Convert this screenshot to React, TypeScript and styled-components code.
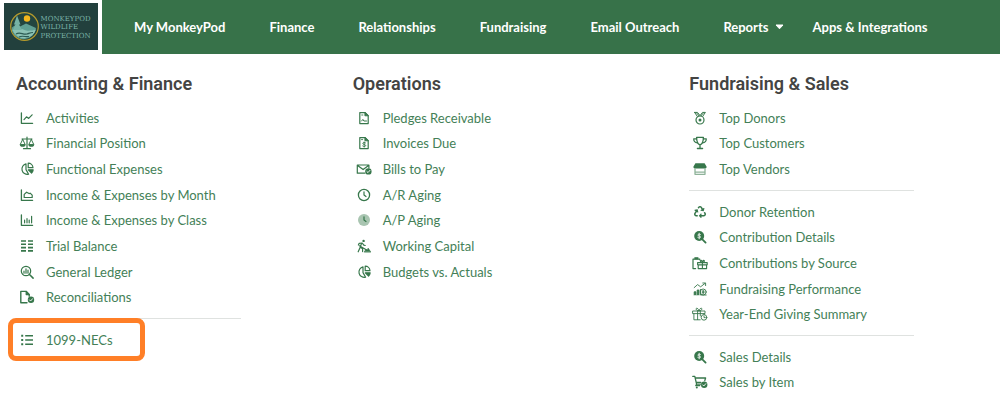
import React from "react";
import styled, { createGlobalStyle } from "styled-components";
import { FaRecycle } from "react-icons/fa";

const GlobalStyle = createGlobalStyle`
  *, *::before, *::after { box-sizing: border-box; }
  body {
    margin: 0;
    background: #fff;
    color: #447f57;
    font-family: Lato, "Open Sans", sans-serif;
    font-size: 13px;
  }
`;

const Header = styled.header`
  display: flex;
  height: 54px;
  background: #fff;
`;

const LogoLink = styled.a`
  flex: none;
  display: flex;
  padding: 3px 4px 4px;
`;

const Nav = styled.nav`
  flex: 1;
  display: flex;
  align-items: center;
  gap: 44px;
  padding-left: 32px;
  background: #377249;
  color: #fff;
  font-weight: 700;
`;

const navText = `
  font: inherit;
  color: inherit;
  line-height: 18px;
  white-space: nowrap;
`;

const NavLink = styled.a`
  ${navText}
  text-decoration: none;
`;

const NavButton = styled.button`
  ${navText}
  display: flex;
  align-items: center;
  gap: 6px;
  margin-right: -15px;
  padding: 0;
  border: 0;
  background: none;
`;

const Menu = styled.main`
  display: grid;
  grid-template-columns: repeat(3, 1fr);
  column-gap: 112px;
  padding: 18px 86px 0 16px;
`;

const Heading = styled.h2`
  margin: 0 0 9px;
  color: #444443;
  font: 600 18px/24px Roboto, sans-serif;
  white-space: nowrap;
`;

const Group = styled.ul`
  margin: 0;
  padding: 0;
  list-style: none;

  & + & {
    margin-top: 8px;
    padding-top: 8px;
    border-top: 1px solid #dfe2e0;
  }
`;

const Item = styled.li`
  position: relative;
  height: 26px;

  &:nth-child(3n + 1) {
    height: 25px;
  }
`;

const ItemLink = styled.a`
  display: flex;
  align-items: center;
  gap: 8px;
  height: 100%;
  color: inherit;
  text-decoration: none;
  white-space: nowrap;
`;

const IconSlot = styled.span`
  flex: none;
  display: flex;
  justify-content: center;
  width: 22px;
  color: #37774b;
`;

const Highlight = styled.span`
  position: absolute;
  top: -9px;
  left: -8px;
  width: 137px;
  height: 43px;
  border: 5px solid #ff7f27;
  border-radius: 8px;
  pointer-events: none;
`;

const Svg = ({ w = 14, children }: { w?: number; children: React.ReactNode }) => (
  <svg
    width={w}
    height={14}
    viewBox={`0 0 ${w} 14`}
    fill="none"
    stroke="currentColor"
    strokeWidth={1.2}
    strokeLinecap="round"
    strokeLinejoin="round"
    aria-hidden="true"
  >
    {children}
  </svg>
);

const CheckBadge = ({ x, y }: { x: number; y: number }) => (
  <g transform={`translate(${x} ${y})`}>
    <circle r={3.2} fill="currentColor" stroke="none" />
    <path d="M-1.5 0.1l1.1 1.1 2-2.3" stroke="#fff" strokeWidth={0.9} />
  </g>
);

const LineChart = () => (
  <Svg>
    <path d="M1.400 2v10.300h11.200" strokeWidth={1.300} />
    <path d="M4 8.600l2.500-2.800 2.200 1.600 3.400-3.600" />
  </Svg>
);

const AreaChart = () => (
  <Svg>
    <path d="M1.400 2v10.300h11.200" strokeWidth={1.300} />
    <path d="M4.200 9.500V6.400l2.400-2.200 2.400 1.400 1.200-.400L12.200 7.200v2.300z" />
  </Svg>
);

const BarChart = () => (
  <Svg>
    <path d="M1.400 2v10.300h11.200" strokeWidth={1.300} />
    <path d="M4.600 7.200V9.800M7 5.600v4.200M9.200 7v2.800M11.600 3.400v6.400" />
  </Svg>
);

const List = () => (
  <Svg>
    <path d="M5.200 2.800h7.800M5.200 7h7.800M5.200 11.200h7.800" strokeWidth={1.500} strokeLinecap="butt" />
    <path d="M1.200 2.800h2M1.200 7h2M1.200 11.200h2" strokeWidth={2} strokeLinecap="butt" />
  </Svg>
);

const Clock = () => (
  <Svg>
    <circle cx={7} cy={7} r={5.600} strokeWidth={1.300} />
    <path d="M7 3.800V7l2 1.500" />
  </Svg>
);

const Trophy = () => (
  <Svg>
    <path d="M3.600 1.400h6.800c0 4.200-1.200 6.600-3.400 7.400-2.200-.800-3.400-3.200-3.400-7.400zM7 8.800v3.400M4.400 12.500h5.200" strokeWidth={1.300} />
    <path d="M3.600 2.800H.7c0 2.400 1.500 3.900 3.700 4M10.400 2.800h2.900c0 2.400-1.500 3.900-3.700 4" />
  </Svg>
);

const Scale = () => (
  <Svg w={16}>
    <path d="M3 3h10M8 1.2v11.2M4.5 12.7h7" />
    <path d="M3.7 3.4L1.2 8.6h5L3.7 3.4zM12.3 3.4L9.8 8.6h5L12.3 3.4z" strokeWidth={1} />
    <path d="M.8 8.4h5.8a2.9 2.3 0 0 1-5.8 0zM9.4 8.4h5.8a2.9 2.3 0 0 1-5.8 0z" fill="currentColor" stroke="none" />
  </Svg>
);

const Pie = () => (
  <Svg>
    <path d="M6 1.800A5.200 5.200 0 1 0 8.600 12.200L6 7.600z" />
    <path d="M8.200 1.200a4.800 4.800 0 0 1 4.800 4.500H8.200z" />
    <path d="M8.300 7.800h4.900a5 5 0 0 1-1.600 3.200z" fill="currentColor" />
  </Svg>
);

const Ledger = () => (
  <Svg>
    {[2, 5.3, 8.6, 11.9].map((y) => (
      <path key={y} d={`M1 ${y}h5M8 ${y}h5`} strokeWidth={1.6} strokeLinecap="butt" />
    ))}
  </Svg>
);

const ZoomChart = () => (
  <Svg>
    <circle cx={6} cy={6} r={4.7} />
    <path d="M9.5 9.5l3.6 3.6" strokeWidth={1.5} />
    <path d="M4 6.2v2M6 3.8v4.4M8 5.2v3" />
  </Svg>
);

const FileCheck = () => (
  <Svg w={16}>
    <path d="M8 12.8H1.800V1.400h5.400l3 3.200v1.600" strokeWidth={1.4} />
    <path d="M7.2 1.4v3.2h3z" fill="currentColor" />
    <CheckBadge x={12} y={9.8} />
  </Svg>
);

const FileSigned = () => (
  <Svg>
    <path d="M2.800 1.600h5.400l3 3v8H2.800z" />
    <path d="M7.9 1.6v3.200H11zM4.700 4h1.200" fill="currentColor" strokeWidth={0.9} />
    <path d="M4.600 10l1.300-1.600 1 1.600h2.600" strokeWidth={1} />
  </Svg>
);

const FileDollar = () => (
  <Svg>
    <path d="M2.800 1.600h5.400l3 3v8H2.800z" />
    <path d="M7.9 1.6v3.200H11zM4.500 3.600h1.200" fill="currentColor" strokeWidth={0.9} />
    <path d="M8.6 6.9c-1-.8-2.8-.5-2.8.6 0 1.3 2.9.7 2.9 2 0 1.1-1.9 1.4-3 .5M7.2 5.9v5.2" strokeWidth={0.9} />
  </Svg>
);

const MailCheck = () => (
  <Svg w={16}>
    <path d="M8.8 11.2H1.300V3h11.600v3M1.600 3.400l5.500 4.200 5.500-4.200" />
    <CheckBadge x={12.4} y={9.4} />
  </Svg>
);

const ClockTone = () => (
  <Svg>
    <circle cx={7} cy={7} r={6} fill="#a9c5b1" stroke="none" />
    <path d="M7 3.8V7l2 1.500" />
  </Svg>
);

const Digging = () => (
  <Svg>
    <circle cx={6.6} cy={1.9} r={1.2} fill="currentColor" stroke="none" />
    <path d="M1.400 6l.8-1.700 3-.300 1.600 2.200 1.500.300M4.600 4.400L3.200 8l2.400 1.800v2.800M3.100 8.600L1.200 12.800M2.400 6.800l6.400 3.600" />
    <path d="M7.400 12.800l1.500-2.400 1.300.300 1-1.500 2.400 3.600z" fill="currentColor" strokeWidth={0.700} />
  </Svg>
);

const Medal = () => (
  <Svg>
    <circle cx={7} cy={9} r={4} />
    <circle cx={7} cy={9} r={1.500} fill="currentColor" stroke="none" />
    <path d="M1.600 1.400h2.900L7 4.600l2.500-3.200h2.900L9.800 5.200M4.200 5.200L1.600 1.400M3.400 1.700L6 4.800M10.600 1.700L8 4.800" strokeWidth={1} />
  </Svg>
);

const Store = () => (
  <Svg>
    <path d="M2.400 1.200h9.200l2 3.600c0 .9-.5 1.600-1.400 1.600H1.800C.9 6.400.4 5.700.4 4.800z" fill="currentColor" stroke="none" />
    <path d="M2 6.900v5.400h10V6.900M2 10.200h10" stroke="#8fb39a" strokeWidth={1.300} />
  </Svg>
);

const ZoomDollar = () => (
  <Svg>
    <circle cx={6.2} cy={6} r={5} fill="currentColor" stroke="none" />
    <path d="M9.6 9.6l3 3" strokeWidth={1.8} />
    <path d="M7.5 4.5c-1-.7-2.7-.3-2.7.6 0 1.2 2.8.6 2.8 1.9 0 1-1.8 1.2-2.9.4M6.2 3.200v5.600" stroke="#fff" strokeWidth={0.8} />
  </Svg>
);

const GiftSource = () => (
  <Svg w={16}>
    <path d="M3.600 12.600H1V3.200h6.800v.6" />
    <path d="M2.400 1.200h4v2.200h-4z" fill="currentColor" stroke="none" />
    <path d="M5.600 6.600h9.600v2.200H5.600zM6.200 9h8.400v3.600H6.200zM10.400 6.600v6M10.400 6.400C8 6.400 8 4.200 9.200 4.400c.8.200 1.200 2 1.200 2s.4-1.800 1.200-2c1.200-.2 1.200 2-1.200 2" strokeWidth={1.1} />
  </Svg>
);

const Growth = () => (
  <Svg>
    <g strokeWidth={0.9}>
      <path d="M1.200 5.600l3.400-3 3 2.200L12 1.400M9.800 1h2.800v2.600" />
      <path d="M1.200 13V9.800h1.700V13M4.200 13V8h1.700v5" fill="currentColor" />
      <circle cx={10.2} cy={10} r={3} />
      <path d="M7.400 7.400V13h5.800M10.200 8.400v3.200M9.200 9.200h2M9.200 10.700h2" />
    </g>
  </Svg>
);

const GiftClock = () => (
  <Svg w={16}>
    <g strokeWidth={0.9}>
      <path d="M1 4h12v2.600H1zM1.900 6.800v6h6.300M5.600 4v8.600M8.300 4v5M12.200 6.800v.6M7 3.800C3.600 3.800 3.400 1 5 1.200c1.300.2 2 2.600 2 2.600s.7-2.400 2-2.600c1.600-.2 1.400 2.600-2 2.600" />
      <circle cx={12} cy={10.4} r={2.8} />
      <path d="M12 9v1.600h1.300" />
    </g>
  </Svg>
);

const CartCheck = () => (
  <Svg w={16}>
    <path d="M.8 1.400h2l1.800 7.800h4M3.200 3h10.400l-.8 2.600M4.400 7.400h4.400M4.600 9.200l-.8 1.400h4" strokeWidth={1.3} />
    <circle cx={4.8} cy={12.6} r={1} fill="currentColor" stroke="none" />
    <CheckBadge x={12.2} y={9.8} />
  </Svg>
);

const Caret = () => (
  <svg width={9} height={6} viewBox="0 0 9 6" aria-hidden="true">
    <path d="M1 1h7L4.500 4.800z" fill="currentColor" stroke="currentColor" strokeLinejoin="round" />
  </svg>
);

const Logo = () => (
  <svg width={94} height={47} viewBox="0 0 94 47" role="img" aria-label="Monkeypod Wildlife Protection">
    <rect width={94} height={47} fill="#22403d" />
    <circle cx={20.5} cy={23.5} r={13.800} fill="#23453f" stroke="#b59a2c" strokeWidth={1.200} />
    <path d="M8 24.500l4-3 3 2.500 7-3.500 10 4.500a12.400 12.400 0 0 1-24 3z" fill="#5f9f93" />
    <path d="M8.500 27c5-3 10-1 12 0s7 1 11.500-.5A12.400 12.400 0 0 1 8.500 27z" fill="#8cc3b5" />
    <path d="M13 12.500l-3 9h1.500L9 27h9l-3-5.500h1.500z" fill="#76b2a4" />
    <path d="M12 31c4-2.500 7 1 11 0 2-.5 3-1.500 6-1.500M15 34c4-2 7 .5 10-.5" fill="none" stroke="#2c5b53" strokeWidth={1.200} />
    <circle cx={23} cy={15.500} r={3.200} fill="#f4b61c" />
    <g fill="#7bb3a8" fontFamily="'DejaVu Serif', serif" fontSize={7}>
      <text x={36.500} y={17.500}>MONKEYPOD</text>
      <text x={36.500} y={26}>WILDLIFE</text>
      <text x={36.500} y={34.500}>PROTECTION</text>
    </g>
  </svg>
);

type Entry = { label: string; icon: React.ReactNode; highlighted?: boolean };

const columns: { title: string; groups: Entry[][] }[] = [
  {
    title: "Accounting & Finance",
    groups: [
      [
        { label: "Activities", icon: <LineChart /> },
        { label: "Financial Position", icon: <Scale /> },
        { label: "Functional Expenses", icon: <Pie /> },
        { label: "Income & Expenses by Month", icon: <AreaChart /> },
        { label: "Income & Expenses by Class", icon: <BarChart /> },
        { label: "Trial Balance", icon: <Ledger /> },
        { label: "General Ledger", icon: <ZoomChart /> },
        { label: "Reconciliations", icon: <FileCheck /> },
      ],
      [{ label: "1099-NECs", icon: <List />, highlighted: true }],
    ],
  },
  {
    title: "Operations",
    groups: [
      [
        { label: "Pledges Receivable", icon: <FileSigned /> },
        { label: "Invoices Due", icon: <FileDollar /> },
        { label: "Bills to Pay", icon: <MailCheck /> },
        { label: "A/R Aging", icon: <Clock /> },
        { label: "A/P Aging", icon: <ClockTone /> },
        { label: "Working Capital", icon: <Digging /> },
        { label: "Budgets vs. Actuals", icon: <Pie /> },
      ],
    ],
  },
  {
    title: "Fundraising & Sales",
    groups: [
      [
        { label: "Top Donors", icon: <Medal /> },
        { label: "Top Customers", icon: <Trophy /> },
        { label: "Top Vendors", icon: <Store /> },
      ],
      [
        { label: "Donor Retention", icon: <FaRecycle size={12} /> },
        { label: "Contribution Details", icon: <ZoomDollar /> },
        { label: "Contributions by Source", icon: <GiftSource /> },
        { label: "Fundraising Performance", icon: <Growth /> },
        { label: "Year-End Giving Summary", icon: <GiftClock /> },
      ],
      [
        { label: "Sales Details", icon: <ZoomDollar /> },
        { label: "Sales by Item", icon: <CartCheck /> },
      ],
    ],
  },
];

export default function App() {
  return (
    <>
      <GlobalStyle />
      <Header>
        <LogoLink href="#">
          <Logo />
        </LogoLink>
        <Nav>
          <NavLink href="#">My MonkeyPod</NavLink>
          <NavLink href="#">Finance</NavLink>
          <NavLink href="#">Relationships</NavLink>
          <NavLink href="#">Fundraising</NavLink>
          <NavLink href="#">Email Outreach</NavLink>
          <NavButton type="button">
            Reports
            <Caret />
          </NavButton>
          <NavLink href="#">Apps &amp; Integrations</NavLink>
        </Nav>
      </Header>
      <Menu>
        {columns.map((column) => (
          <section key={column.title}>
            <Heading>{column.title}</Heading>
            {column.groups.map((group, index) => (
              <Group key={index}>
                {group.map((entry) => (
                  <Item key={entry.label}>
                    <ItemLink href="#">
                      <IconSlot>{entry.icon}</IconSlot>
                      {entry.label}
                    </ItemLink>
                    {entry.highlighted && <Highlight />}
                  </Item>
                ))}
              </Group>
            ))}
          </section>
        ))}
      </Menu>
    </>
  );
}
